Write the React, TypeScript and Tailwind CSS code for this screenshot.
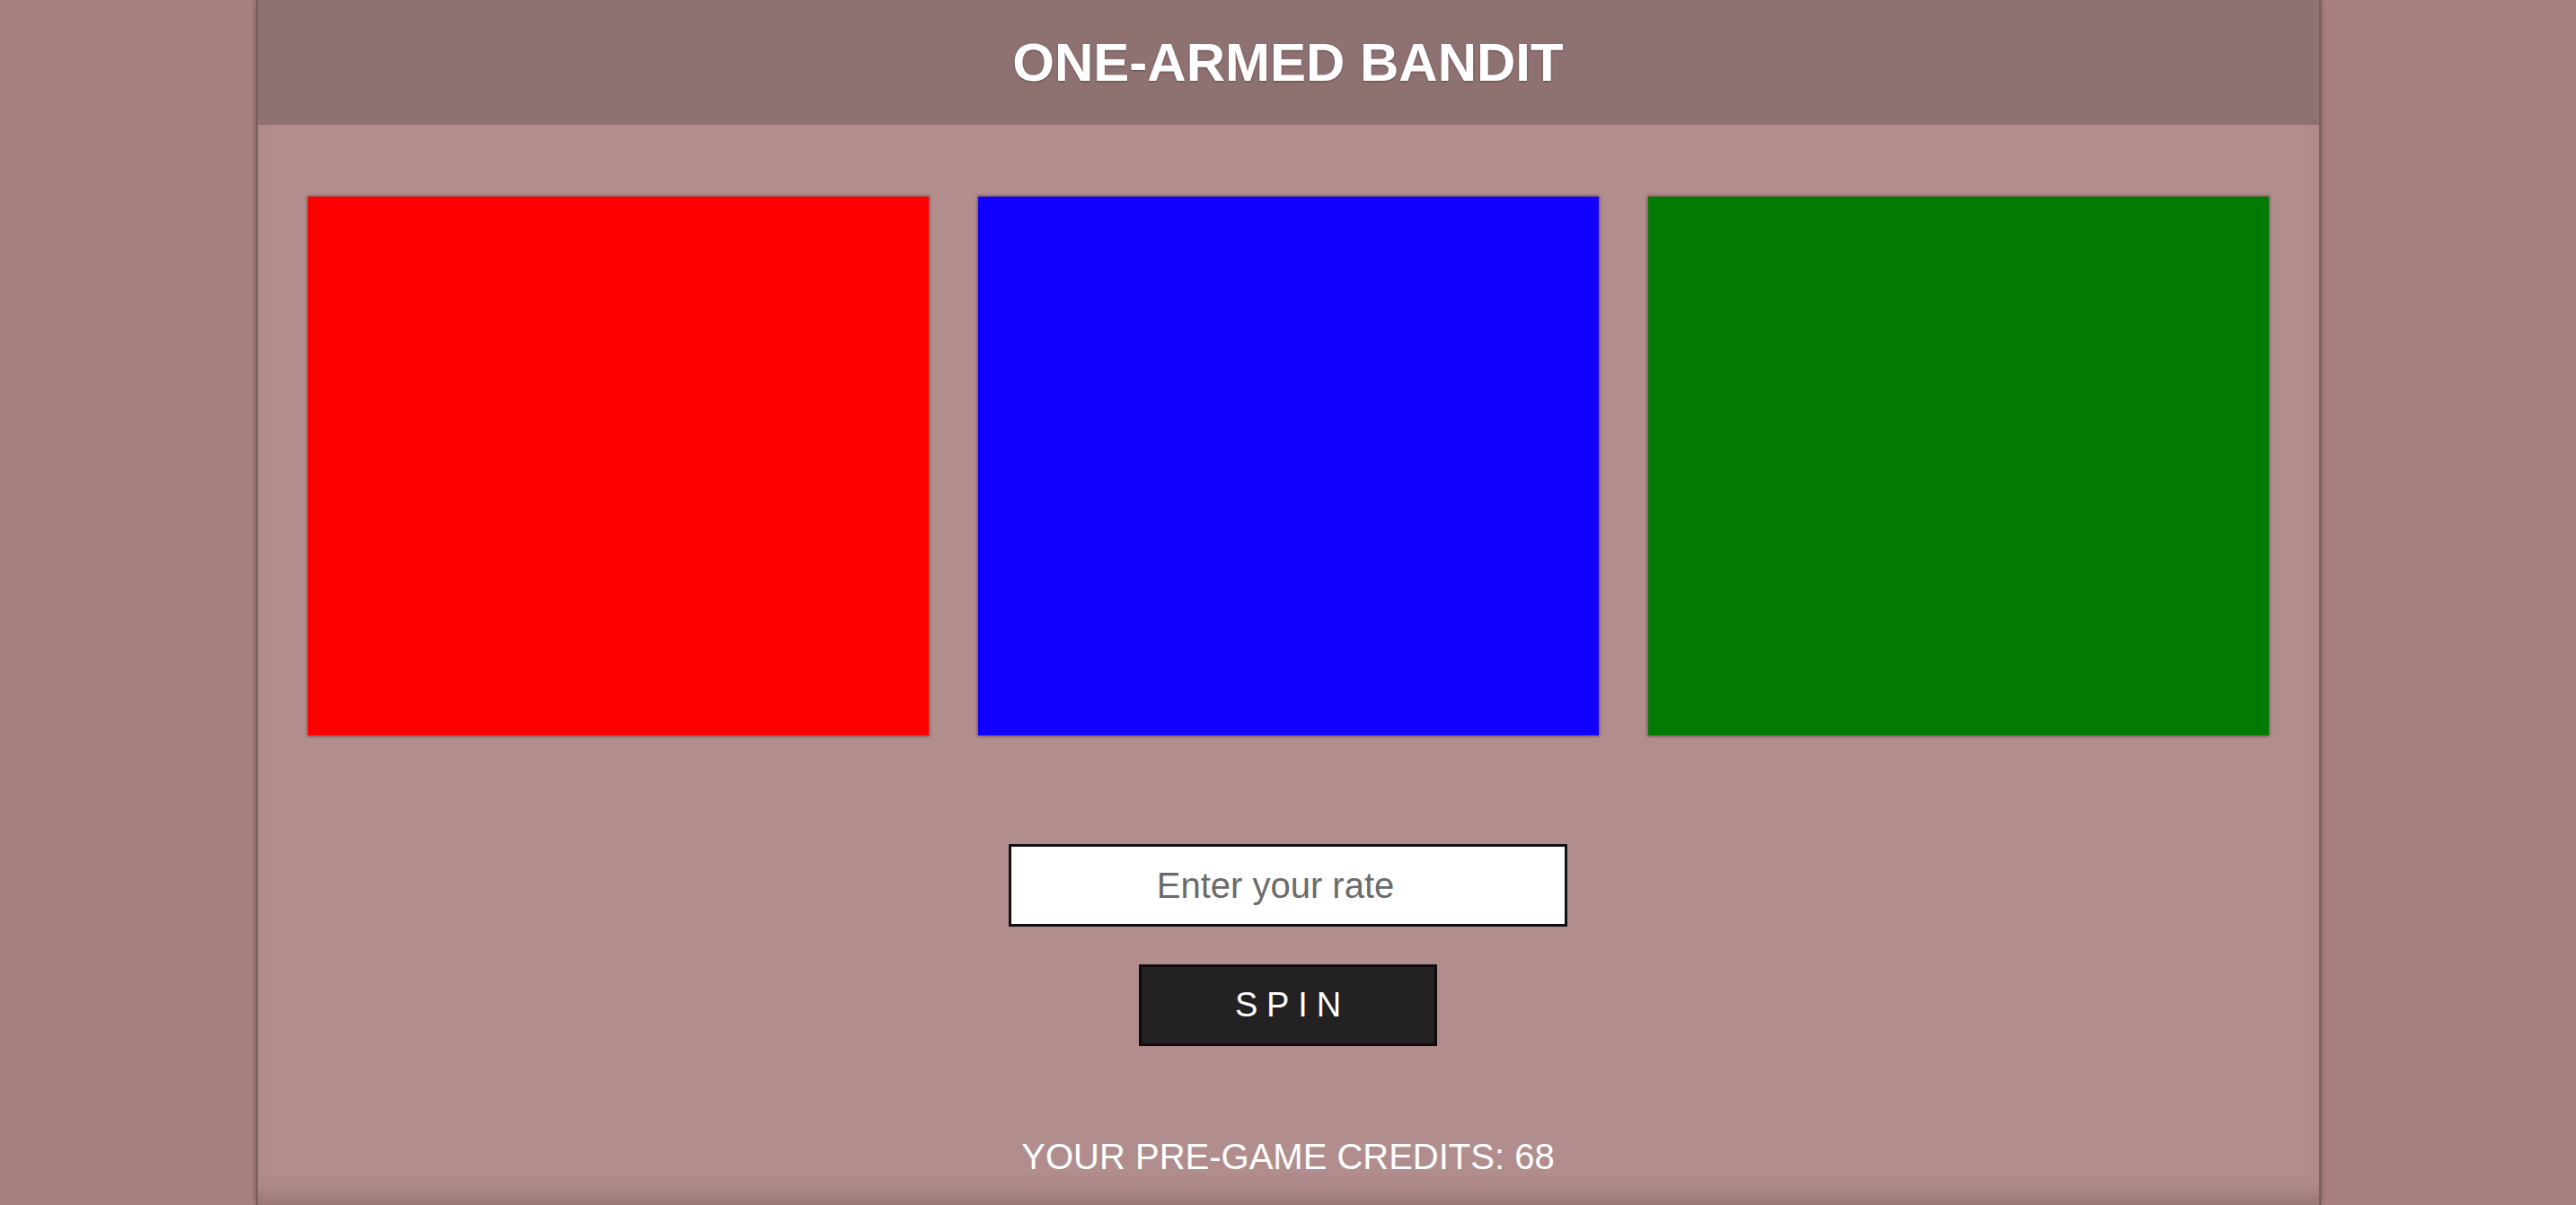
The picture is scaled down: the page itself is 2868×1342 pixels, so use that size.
import { FC, useState } from 'react';

const reels = ['bg-[#fe0000]', 'bg-[#1000fe]', 'bg-[#037b03]'];

const App: FC = () => {
  const [rate, setRate] = useState<string>('');
  const credits = 68;

  return (
    <div className="flex min-h-screen justify-center bg-[#a98080] font-['Liberation_Sans',Arial,sans-serif]">
      <div className="flex h-[1342px] w-[2299px] flex-col border-x-2 border-[#7a5d5d] bg-[#b18e8d] shadow-[0_0_6px_rgba(0,0,0,0.35),inset_0_-24px_30px_-20px_rgba(90,60,60,0.45)]">
        <header className="flex h-[139px] items-center justify-center bg-[#8e7171]">
          <h1 className="text-[60px] font-bold leading-none text-white [text-shadow:0_1px_2px_rgba(60,30,30,0.5)]">
            ONE-ARMED BANDIT
          </h1>
        </header>

        <div className="grid grid-cols-3 gap-[55px] px-[56px] pt-[80px]">
          {reels.map((color, index) => (
            <div
              key={index}
              className={`h-[600px] ${color} shadow-[0_0_3px_1px_rgba(70,40,40,0.6)]`}
            />
          ))}
        </div>

        <div className="flex flex-col items-center">
          <input
            type="text"
            placeholder="Enter your rate"
            value={rate}
            onChange={(e) => setRate(e.target.value)}
            className="mt-[121px] h-[92px] w-[622px] border-[3px] border-[#111] bg-white pr-[28px] text-center text-[40px] text-[#333] outline-none placeholder:text-[#6b6b6b]"
          />
          <button
            type="button"
            className="mt-[42px] h-[91px] w-[332px] border-[3px] border-[#0d0d0d] bg-[#232122] pl-[10px] text-[38px] tracking-[0.26em] text-white"
          >
            SPIN
          </button>
          <p className="mt-[100px] text-[40px] leading-[46px] text-white">
            YOUR PRE-GAME CREDITS: {credits}
          </p>
        </div>
      </div>
    </div>
  );
};

export default App;
